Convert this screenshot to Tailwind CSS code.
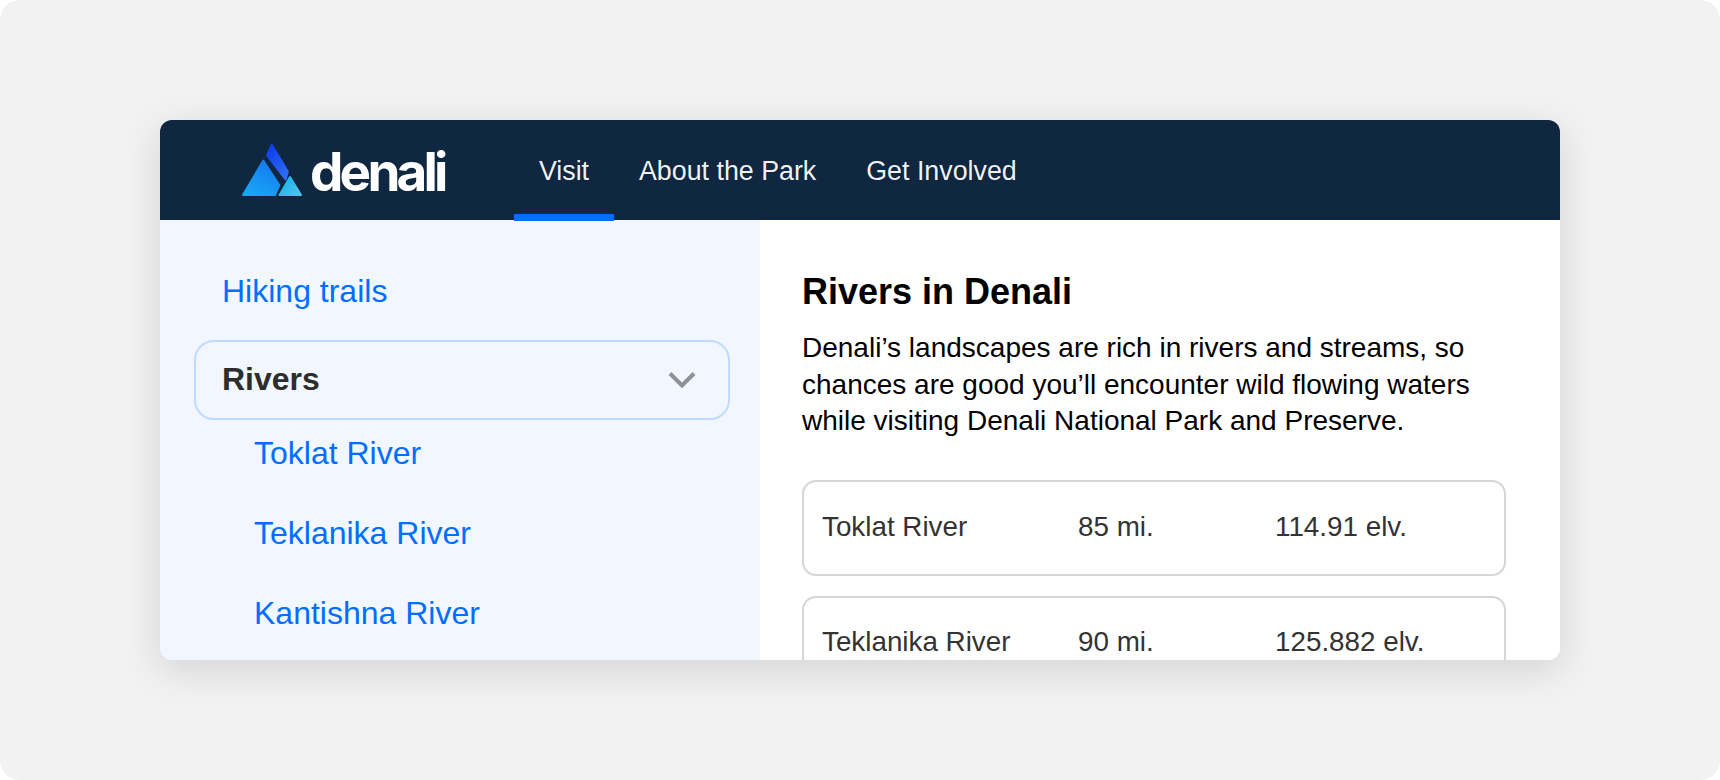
<!DOCTYPE html>
<html lang="en">
<head>
    <meta charset="UTF-8">
    <script src="https://cdn.jsdelivr.net/npm/@tailwindcss/browser@4"></script>
    <title>Denali</title>
</head>
<body class="bg-white">
    <div class="w-[1720px] h-[780px] bg-[#f2f2f2] rounded-[20px] flex items-center justify-center font-['Liberation_Sans',Arial,sans-serif]">
        <!-- Card -->
        <div class="w-[1400px] h-[540px] rounded-[12px] overflow-hidden flex flex-col shadow-[0_10px_40px_rgba(0,0,0,0.13)]">
            <!-- Header -->
            <header class="h-[100px] shrink-0 bg-[#0f2740] flex items-stretch pl-[81px]">
                <a class="flex items-center w-[273px] shrink-0 gap-[7px]">
                    <svg width="62" height="54" viewBox="0 0 62 54" class="shrink-0" stroke-width="2" stroke-linejoin="round">
                        <defs>
                            <linearGradient id="top" x1="0.2" y1="0" x2="0.8" y2="1">
                                <stop offset="0" stop-color="#0a3de8"/>
                                <stop offset="1" stop-color="#2f6cf5"/>
                            </linearGradient>
                            <linearGradient id="left" x1="0.7" y1="0" x2="0.2" y2="1">
                                <stop offset="0" stop-color="#1578f0"/>
                                <stop offset="1" stop-color="#17a8f5"/>
                            </linearGradient>
                            <linearGradient id="right" x1="0" y1="0" x2="1" y2="1">
                                <stop offset="0" stop-color="#0fb0ea"/>
                                <stop offset="1" stop-color="#52c4ee"/>
                            </linearGradient>
                        </defs>
                        <polygon points="30.7,1.5 46.8,28.6 44.6,36.5 25.9,12.4" fill="url(#top)" stroke="url(#top)"/>
                        <polygon points="22.3,17.5 38.4,42.2 34,52 2,52" fill="url(#left)" stroke="url(#left)"/>
                        <polygon points="49,34 60,52 38.5,52" fill="url(#right)" stroke="url(#right)"/>
                    </svg>
                    <span class="font-['Inter',sans-serif] font-bold text-[53px] leading-none tracking-[-3.8px] text-white mt-[4px]">denali</span>
                </a>
                <nav class="flex items-stretch text-[26.8px] text-white/95">
                    <a class="relative w-[100px] flex items-center justify-center pt-[2px]">Visit
                        <span class="absolute left-0 right-0 bottom-[-1px] h-[7px] bg-[#006eff]"></span>
                    </a>
                    <a class="ml-[25px] flex items-center pt-[2px]">About the Park</a>
                    <a class="ml-[50px] flex items-center pt-[2px]">Get Involved</a>
                </nav>
            </header>
            <div class="flex flex-1 min-h-0">
                <!-- Sidebar -->
                <aside class="w-[600px] shrink-0 bg-[#f1f6ff] pl-[34px] pr-[30px] text-[#006eff] text-[32px]">
                    <a class="block pl-[28px] mt-[53px] h-[36px] leading-[36px]">Hiking trails</a>
                    <button class="mt-[31px] w-full h-[80px] rounded-[20px] border-2 border-[#bfdbfe] flex items-center justify-between pl-[26px] pr-[31px]">
                        <span class="font-bold text-[#2d2d2d] text-[32px] mt-[-2px]">Rivers</span>
                        <svg width="30" height="18" viewBox="0 0 30 18" fill="none" stroke="#8e9196" stroke-width="4"><path d="M3 2.5 L15 14.5 L27 2.5"/></svg>
                    </button>
                    <ul class="mt-[1px] pl-[60px] flex flex-col gap-[16px]">
                        <li class="h-[64px] flex items-center">Toklat River</li>
                        <li class="h-[64px] flex items-center">Teklanika River</li>
                        <li class="h-[64px] flex items-center">Kantishna River</li>
                    </ul>
                </aside>
                <!-- Content -->
                <main class="flex-1 min-w-0 bg-white pl-[42px] pr-[54px] pt-[54px] overflow-hidden">
                    <h1 class="font-bold text-black text-[36px] leading-[36px]">Rivers in Denali</h1>
                    <p class="mt-[20px] text-[28px] leading-[36.5px] text-black">Denali’s landscapes are rich in rivers and streams, so chances are good you’ll encounter wild flowing waters while visiting Denali National Park and Preserve.</p>
                    <div class="mt-[40.5px] flex flex-col gap-[20px] text-[#333] text-[27.8px]">
                        <div class="h-[96px] shrink-0 rounded-[14px] border-2 border-[#d6d6d6] flex items-center pl-[18px] pb-[2px]">
                            <span class="w-[256px]">Toklat River</span><span class="w-[197px]">85 mi.</span><span>114.91 elv.</span>
                        </div>
                        <div class="h-[96px] shrink-0 rounded-[14px] border-2 border-[#d6d6d6] flex items-center pl-[18px] pb-[4px]">
                            <span class="w-[256px]">Teklanika River</span><span class="w-[197px]">90 mi.</span><span>125.882 elv.</span>
                        </div>
                    </div>
                </main>
            </div>
        </div>
    </div>
</body>
</html>
